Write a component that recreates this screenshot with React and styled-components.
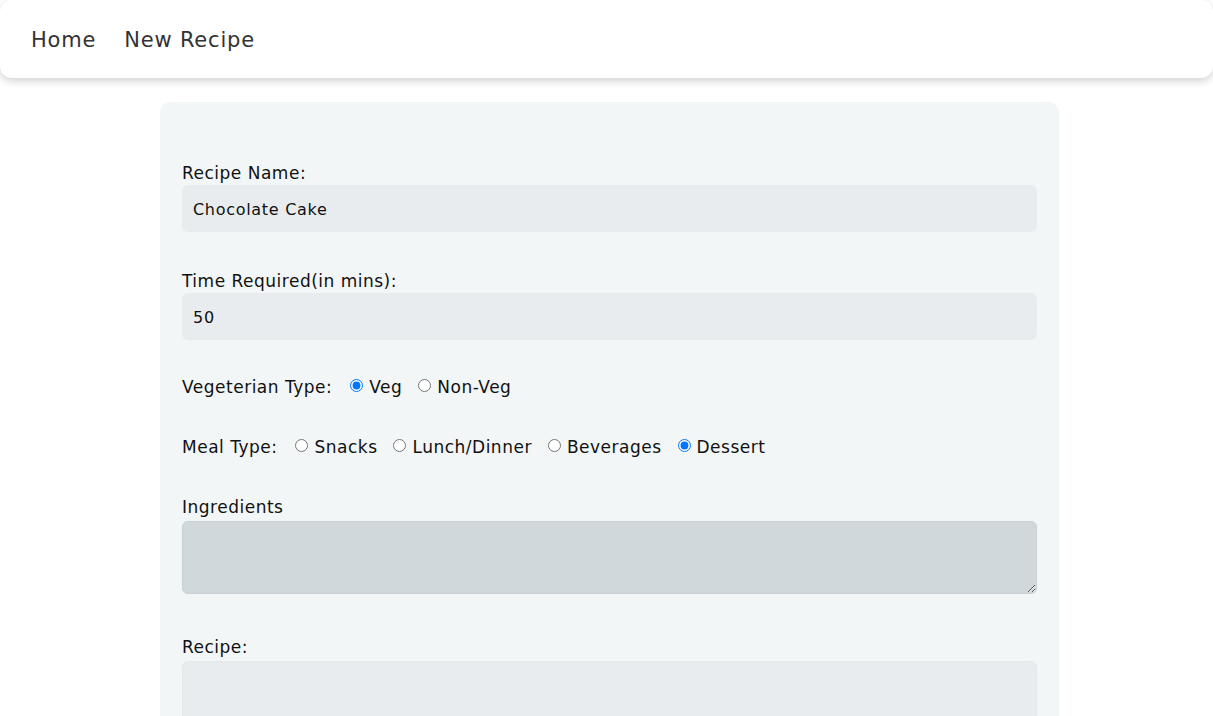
import styled, { createGlobalStyle } from "styled-components"

const GlobalStyle = createGlobalStyle`
	body {
		margin: 0;
		background: #ffffff;
		font-family: "DejaVu Sans", "Open Sans", sans-serif;
		color: #111;
	}
`

const StyledNav = styled.nav`
	height: 78px;
	background: #ffffff;
	border-radius: 12px;
	box-shadow: 0 3px 8px rgba(0, 0, 0, 0.18);
	display: flex;
	align-items: center;
	padding: 2px 31px 0;
	box-sizing: border-box;
	gap: 28px;
	a {
		font-size: 21px;
		color: #333;
		text-decoration: none;
		letter-spacing: 0.8px;
	}
`

const Page = styled.main`
	padding-left: 160px;
	padding-top: 24px;
`

const FormCard = styled.form`
	width: 899px;
	box-sizing: border-box;
	background: #f2f6f7;
	border-radius: 10px;
	padding: 59px 22px 0;
	height: 640px;
`

const Field = styled.div`
	margin-bottom: ${({ $gap }) => $gap || 36}px;
`

const Label = styled.label`
	display: block;
	font-size: 17px;
	line-height: 24px;
	letter-spacing: 0.5px;
	color: #111;
	margin-bottom: ${({ $space }) => $space || 0}px;
`

const TextInput = styled.input`
	display: block;
	width: 100%;
	box-sizing: border-box;
	height: 47px;
	border: none;
	border-radius: 6px;
	background: #e8ecef;
	padding: 2px 11px 0;
	font-family: inherit;
	font-size: 16px;
	letter-spacing: 0.7px;
	color: #111;
	outline: none;
`

const TextArea = styled.textarea`
	display: block;
	width: 100%;
	box-sizing: border-box;
	height: 73px;
	border: 1px solid ${({ $dark }) => ($dark ? "#c9d0d4" : "#e3e8eb")};
	border-radius: 6px;
	background: ${({ $dark }) => ($dark ? "#d1d8dc" : "#e8ecef")};
	font-family: inherit;
	font-size: 15px;
	outline: none;
`

const RadioRow = styled.div`
	display: flex;
	align-items: center;
	height: 24px;
	font-size: 17px;
	letter-spacing: 0.5px;
	.title {
		margin-right: 18px;
	}
`

const Option = styled.label`
	display: flex;
	align-items: center;
	gap: 6px;
	margin-right: 16px;
	input {
		margin: 0;
		width: 13px;
		height: 13px;
		position: relative;
		top: -2px;
	}
`

function RadioGroup({ title, name, options, checked }) {
	return (
		<RadioRow>
			<span className="title">{title}</span>
			{options.map((opt) => (
				<Option key={opt}>
					<input type="radio" name={name} defaultChecked={opt === checked} />
					{opt}
				</Option>
			))}
		</RadioRow>
	)
}

export default function App() {
	return (
		<>
			<GlobalStyle />
			<StyledNav>
				<a href="#">Home</a>
				<a href="#">New Recipe</a>
			</StyledNav>
			<Page>
				<FormCard>
					<Field $gap={37}>
						<Label>Recipe Name:</Label>
						<TextInput defaultValue="Chocolate Cake" />
					</Field>
					<Field $gap={35}>
						<Label>Time Required(in mins):</Label>
						<TextInput defaultValue="50" />
					</Field>
					<Field>
						<RadioGroup title="Vegeterian Type:" name="veg" options={["Veg", "Non-Veg"]} checked="Veg" />
					</Field>
					<Field>
						<RadioGroup
							title="Meal Type:"
							name="meal"
							options={["Snacks", "Lunch/Dinner", "Beverages", "Dessert"]}
							checked="Dessert"
						/>
					</Field>
					<Field $gap={41}>
						<Label $space={2}>Ingredients</Label>
						<TextArea $dark />
					</Field>
					<Field>
						<Label $space={2}>Recipe:</Label>
						<TextArea />
					</Field>
				</FormCard>
			</Page>
		</>
	)
}
